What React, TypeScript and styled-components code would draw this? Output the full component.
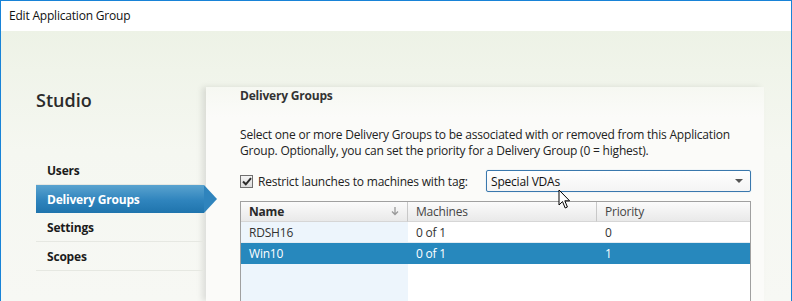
import React from "react";
import styled, { createGlobalStyle } from "styled-components";

const GlobalStyle = createGlobalStyle`
  html, body { margin: 0; padding: 0; background: #ffffff; }
  body { font-family: "Open Sans", "Noto Sans", sans-serif; letter-spacing: -0.2px; }
  * { box-sizing: border-box; }
`;

const Window = styled.div`
  position: relative;
  width: 792px;
  height: 301px;
  border: 1px solid #1883d7;
  border-bottom: none;
  display: flex;
  flex-direction: column;
  overflow: hidden;
`;

const TitleBar = styled.div`
  height: 30px;
  flex: none;
  background: #ffffff;
  padding: 6px 0 0 8px;
  font-size: 12px;
  color: #111;
`;

const Body = styled.div`
  flex: 1;
  display: flex;
  background: linear-gradient(180deg, #edf2e6 0px, #f0f4ea 40px, #f5f7f1 120px, #f7f8f4 270px);
`;

const Sidebar = styled.div`
  width: 203px;
  flex: none;
  padding: 58px 0 0 35px;
  display: flex;
  flex-direction: column;
`;

const Brand = styled.div`
  font-size: 18px;
  font-weight: 600;
  color: #2b2b2b;
  height: 67px;
  line-height: 22px;
  letter-spacing: 0;
`;

const Nav = styled.ul`
  list-style: none;
  margin: 0;
  padding: 0;
  display: flex;
  flex-direction: column;
`;

const NavItem = styled.li<{ $active?: boolean }>`
  position: relative;
  height: ${(p) => (p.$active ? "28px" : "29px")};
  padding-left: 11px;
  display: flex;
  align-items: center;
  font-size: 12px;
  font-weight: 700;
  color: ${(p) => (p.$active ? "#ffffff" : "#1b1b1b")};
  background: ${(p) =>
    p.$active ? "linear-gradient(180deg, #5aa3cf 0%, #2f84bd 55%, #1f74ad 100%)" : "transparent"};
  border-bottom: ${(p) => (p.$active ? "none" : "1px solid #e6e8e2")};
  &::after {
    content: "";
    display: ${(p) => (p.$active ? "block" : "none")};
    position: absolute;
    right: -13px;
    top: 0;
    width: 0;
    height: 0;
    border-top: 14px solid transparent;
    border-bottom: 14px solid transparent;
    border-left: 13px solid #2f84bd;
  }
`;

const Panel = styled.div`
  width: 558px;
  flex: none;
  margin: 56px 0 0 2px;
  padding: 0 12px 0 34px;
  background: linear-gradient(180deg, #f6f8f2 0px, #fbfbf9 30px);
  box-shadow: -4px 0 6px rgba(0, 0, 0, 0.1);
  display: flex;
  flex-direction: column;
`;

const Heading = styled.div`
  font-size: 12px;
  font-weight: 700;
  color: #333;
  height: 40px;
`;

const Description = styled.p`
  margin: 0;
  font-size: 12px;
  line-height: 16px;
  color: #222;
  height: 42px;
`;

const TagRow = styled.div`
  display: flex;
  align-items: center;
  height: 24px;
  margin-bottom: 8px;
`;

const CheckBox = styled.span`
  width: 13px;
  height: 13px;
  border: 1px solid #6f6f6f;
  background: linear-gradient(180deg, #f4f4f4, #dcdcdc);
  display: inline-flex;
  align-items: center;
  justify-content: center;
  margin-right: 5px;
`;

const Label = styled.span`
  font-size: 12px;
  color: #222;
  width: 228px;
`;

const Select = styled.div`
  width: 265px;
  height: 22px;
  border: 1px solid #3a78ad;
  border-radius: 2px;
  box-shadow: 0 0 1px #9cc4e6;
  background: linear-gradient(180deg, #ffffff, #f4f4f4);
  display: flex;
  align-items: center;
  justify-content: space-between;
  padding: 0 7px 0 4px;
  font-size: 12px;
  color: #111;
`;

const Caret = styled.span`
  width: 0;
  height: 0;
  border-left: 4px solid transparent;
  border-right: 4px solid transparent;
  border-top: 4px solid #555;
`;

const Table = styled.div`
  flex: 1;
  width: 511px;
  border: 1px solid #a0a0a0;
  border-bottom: none;
  display: grid;
  grid-template-columns: 167px 189px 1fr;
  grid-template-rows: 20px 21px 21px 1fr;
  background: linear-gradient(90deg, #edf5fc 167px, #ffffff 167px);
`;

const HeadCell = styled.div<{ $bold?: boolean; $last?: boolean }>`
  display: flex;
  align-items: center;
  justify-content: space-between;
  padding: 0 8px 0 8px;
  font-size: 12px;
  font-weight: ${(p) => (p.$bold ? 700 : 400)};
  color: ${(p) => (p.$bold ? "#2a2a2a" : "#444")};
  background: linear-gradient(180deg, #fbfbfb, #e9e9e9);
  border-right: ${(p) => (p.$last ? "none" : "1px solid #c8c8c8")};
  border-bottom: 1px solid #d6d6d6;
`;

const Cell = styled.div<{ $selected?: boolean }>`
  display: flex;
  align-items: center;
  padding-left: 8px;
  font-size: 12px;
  color: ${(p) => (p.$selected ? "#ffffff" : "#333")};
  background: ${(p) => (p.$selected ? "#2788bd" : "transparent")};
  border-bottom: 1px solid ${(p) => (p.$selected ? "#2788bd" : "#e4ecf2")};
`;

const Cursor = styled.svg`
  position: absolute;
  left: 557px;
  top: 188px;
`;

const rows = [
  { name: "RDSH16", machines: "0 of 1", priority: "0", selected: false },
  { name: "Win10", machines: "0 of 1", priority: "1", selected: true },
];

export default function App() {
  return (
    <>
      <GlobalStyle />
      <Window>
        <TitleBar>Edit Application Group</TitleBar>
        <Body>
          <Sidebar>
            <Brand>Studio</Brand>
            <Nav>
              <NavItem>Users</NavItem>
              <NavItem $active>Delivery Groups</NavItem>
              <NavItem>Settings</NavItem>
              <NavItem>Scopes</NavItem>
            </Nav>
          </Sidebar>
          <Panel>
            <Heading>Delivery Groups</Heading>
            <Description>
              Select one or more Delivery Groups to be associated with or removed from this Application
              Group. Optionally, you can set the priority for a Delivery Group (0 = highest).
            </Description>
            <TagRow>
              <CheckBox>
                <svg width="10" height="9" viewBox="0 0 10 9">
                  <path d="M1 4.5 L3.8 7.3 L9 1.2" stroke="#2b2b2b" strokeWidth="2" fill="none" />
                </svg>
              </CheckBox>
              <Label>Restrict launches to machines with tag:</Label>
              <Select>
                <span>Special VDAs</span>
                <Caret />
              </Select>
            </TagRow>
            <Table>
              <HeadCell $bold>
                <span>Name</span>
                <svg width="8" height="9" viewBox="0 0 8 9">
                  <path d="M4 0 V7 M1 4.5 L4 7.5 L7 4.5" stroke="#999" strokeWidth="1.3" fill="none" />
                </svg>
              </HeadCell>
              <HeadCell>Machines</HeadCell>
              <HeadCell $last>Priority</HeadCell>
              {rows.map((r) => (
                <React.Fragment key={r.name}>
                  <Cell $selected={r.selected}>{r.name}</Cell>
                  <Cell $selected={r.selected}>{r.machines}</Cell>
                  <Cell $selected={r.selected}>{r.priority}</Cell>
                </React.Fragment>
              ))}
            </Table>
          </Panel>
        </Body>
        <Cursor width="14" height="22" viewBox="0 0 14 22">
          <path
            d="M1 1 L1 16 L4.5 12.6 L7.2 19 L9.4 18 L6.8 11.8 L11.6 11.8 Z"
            fill="#ffffff"
            stroke="#000000"
            strokeWidth="1"
            strokeLinejoin="round"
          />
        </Cursor>
      </Window>
    </>
  );
}
